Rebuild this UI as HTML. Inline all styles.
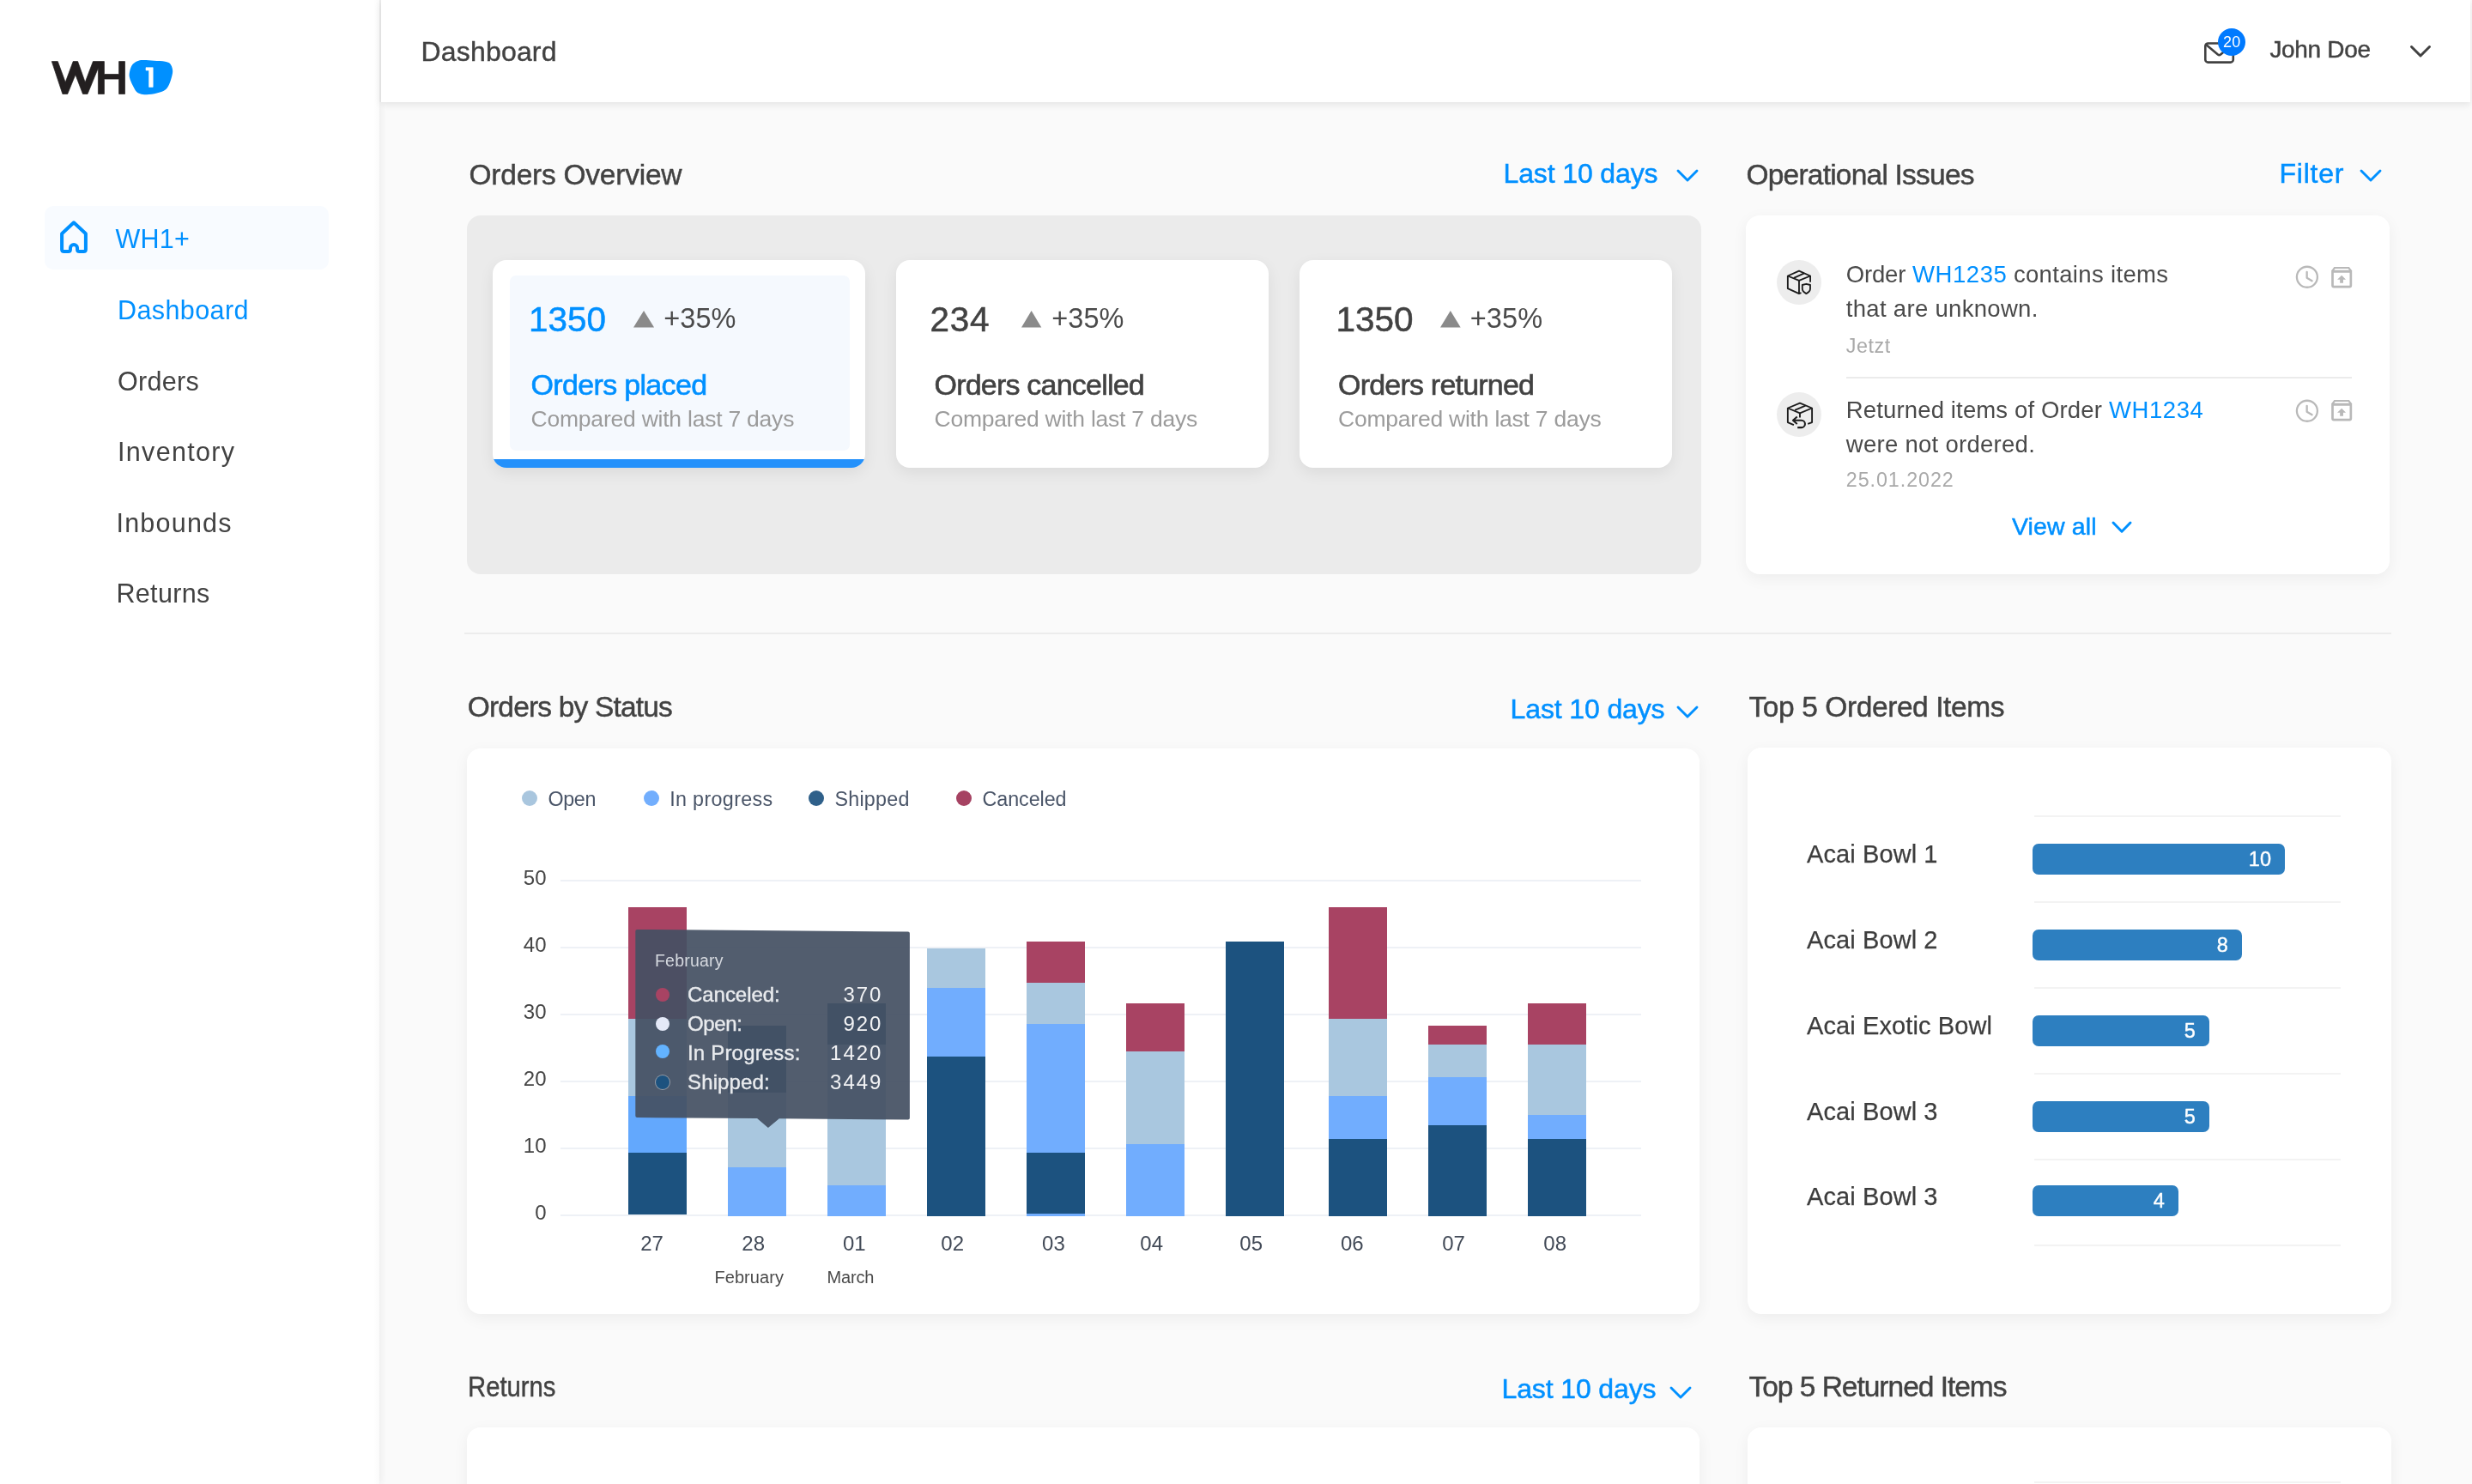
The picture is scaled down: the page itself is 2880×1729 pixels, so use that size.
<!DOCTYPE html>
<html lang="en"><head><meta charset="utf-8"><title>WH1+ Dashboard</title>
<style>

*{box-sizing:border-box;margin:0;padding:0}
html,body{width:2880px;height:1729px;overflow:hidden;background:#fafafa;font-family:"Liberation Sans",sans-serif}
body{position:relative}
#root{position:absolute;left:0;top:0;width:2880px;height:1729px;overflow:hidden;will-change:transform}
.t{position:absolute;white-space:pre;line-height:1;display:block}
.a{position:absolute;display:block}
.card{position:absolute;background:#fff;border-radius:16px;box-shadow:0 5px 18px rgba(0,0,0,.055)}
svg{position:absolute;overflow:visible}

</style></head>
<body>
<div id="root">
<div class="a" style="left:0;top:0;width:441.8px;height:1729px;background:#fff;box-shadow:2px 0 8px rgba(0,0,0,.06)"></div>
<div class="a" style="left:435px;top:0;width:6.8px;height:1729px;background:linear-gradient(to right,rgba(0,0,0,0),rgba(0,0,0,.02))"></div>
<div class="a" style="left:441.8px;top:0;width:2.3px;height:119.3px;background:#ececec"></div>
<div class="a" style="left:444px;top:0;width:2434px;height:119px;background:#fff;box-shadow:0 3px 8px rgba(0,0,0,.09)"></div>
<svg style="left:0;top:0" width="260" height="130" viewBox="0 0 260 130"><path d="M60.3 71.6 L67.3 71.6 L76.2 95.8 L85.2 71.6 L90.6 71.6 L99.2 95.8 L108.4 71.6 L121.4 71.6 L121.4 86.5 L138.6 86.5 L138.6 71.6 L145.5 71.6 L145.5 109.5 L138.6 109.5 L138.6 92.1 L121.4 92.1 L121.4 109.5 L114.4 109.5 L114.4 79.3 L102.0 109.5 L96.5 109.5 L87.9 87.0 L78.7 109.5 L72.9 109.5 Z" fill="#231f20" stroke="#231f20" stroke-width="0.7" stroke-linejoin="round"/><path d="M150.65 85.90 C150.98 83.20 152.04 78.63 153.60 76.20 C155.16 73.77 157.85 72.33 160.00 71.30 C162.15 70.27 163.27 70.10 166.50 70.00 C169.73 69.90 175.08 70.42 179.40 70.70 C183.72 70.98 189.27 71.07 192.40 71.65 C195.53 72.23 196.75 72.58 198.20 74.20 C199.65 75.83 200.77 78.92 201.10 81.40 C201.43 83.88 200.90 86.20 200.20 89.10 C199.50 92.00 198.20 96.20 196.90 98.80 C195.60 101.40 194.77 103.08 192.40 104.70 C190.03 106.32 186.27 107.58 182.70 108.50 C179.13 109.42 174.23 110.08 171.00 110.20 C167.77 110.32 165.35 109.80 163.30 109.20 C161.25 108.60 160.10 108.12 158.70 106.60 C157.30 105.08 156.08 102.47 154.90 100.10 C153.72 97.73 152.31 94.77 151.60 92.40 C150.89 90.03 150.32 88.60 150.65 85.90 Z" fill="#0090ff"/><path d="M170 78.7 H178.2 V101.4 H173.6 V82 H170 Z" fill="#fff" stroke="#fff" stroke-width="0.6" stroke-linejoin="round"/></svg>
<div class="a" style="left:52px;top:240px;width:331px;height:74px;background:#f8fbff;border-radius:10px"></div>
<svg style="left:0;top:0" width="443" height="330" viewBox="0 0 443 330"><path d="M72.1 272.2 L85.95 259.3 L99.9 272.2 V290.4 Q99.9 292.9 97.4 292.9 H92.5 Q90.05 292.9 90.05 290.4 V288.95 A4.05 4.05 0 0 0 81.96 288.95 V290.4 Q81.96 292.9 79.5 292.9 H74.6 Q72.1 292.9 72.1 290.4 Z" fill="none" stroke="#0090ff" stroke-width="4" stroke-linejoin="round"/></svg>
<svg style="left:0;top:0" width="2880" height="119" viewBox="0 0 2880 119" fill="none" stroke="#424242" stroke-width="2.6" stroke-linejoin="round" stroke-linecap="round"><rect x="2569.3" y="50.55" width="32.5" height="22.05" rx="3.2"/><path d="M2570.2 51.9 L2583.9 63.6 Q2585.5 64.9 2587.1 63.6 L2600.9 51.9"/></svg>
<div class="a" style="left:2583.9px;top:32.85px;width:32.2px;height:32.2px;border-radius:50%;background:#007aff"></div>
<svg style="left:2808px;top:53px" width="24" height="15" viewBox="0 0 24 15"><path d="M1.5 1.5 L12 12 L22.5 1.5" fill="none" stroke="#424242" stroke-width="3" stroke-linecap="round" stroke-linejoin="round"/></svg>
<svg style="left:1952.5px;top:197.0px" width="26" height="15" viewBox="-2 -2 26 15"><path d="M0 0 L11.0 11 L22 0" fill="none" stroke="#0090ff" stroke-width="2.9" stroke-linecap="round" stroke-linejoin="round"/></svg>
<div class="a" style="left:544px;top:250.8px;width:1438px;height:418.2px;background:#ebebeb;border-radius:16px"></div>
<div class="a" style="left:574px;top:303px;width:434px;height:241.5px;background:#fff;border-radius:16px;box-shadow:0 6px 18px rgba(0,0,0,.07);overflow:hidden"><div class="a" style="left:19.6px;top:18.2px;width:396.5px;height:204px;background:#f5f9fe;border-radius:7px"></div><div class="a" style="left:0;bottom:0;width:434px;height:9.5px;background:#2491fb"></div></div>
<div class="a" style="left:1044px;top:303px;width:434px;height:241.5px;background:#fff;border-radius:16px;box-shadow:0 6px 18px rgba(0,0,0,.07);overflow:hidden"></div>
<div class="a" style="left:1514px;top:303px;width:434px;height:241.5px;background:#fff;border-radius:16px;box-shadow:0 6px 18px rgba(0,0,0,.07);overflow:hidden"></div>
<svg style="left:737.5px;top:362px" width="24.100000000000023" height="19.399999999999977" viewBox="0 0 24.100000000000023 19.399999999999977"><path d="M0 19.399999999999977 L12.050000000000011 0 L24.100000000000023 19.399999999999977 Z" fill="#8a8a8a"/></svg>
<svg style="left:1189.5px;top:362px" width="23.299999999999955" height="19.399999999999977" viewBox="0 0 23.299999999999955 19.399999999999977"><path d="M0 19.399999999999977 L11.649999999999977 0 L23.299999999999955 19.399999999999977 Z" fill="#8a8a8a"/></svg>
<svg style="left:1677.5px;top:362px" width="23.700000000000045" height="19.399999999999977" viewBox="0 0 23.700000000000045 19.399999999999977"><path d="M0 19.399999999999977 L11.850000000000023 0 L23.700000000000045 19.399999999999977 Z" fill="#8a8a8a"/></svg>
<svg style="left:2748.5px;top:197.0px" width="26" height="15" viewBox="-2 -2 26 15"><path d="M0 0 L11.0 11 L22 0" fill="none" stroke="#0090ff" stroke-width="2.9" stroke-linecap="round" stroke-linejoin="round"/></svg>
<div class="card" style="left:2034px;top:251px;width:750px;height:418px"></div>
<div class="a" style="left:2069.8px;top:302.8px;width:52px;height:52px;border-radius:50%;background:#ededed"></div>
<div class="a" style="left:2069.8px;top:456.8px;width:52px;height:52px;border-radius:50%;background:#ededed"></div>
<svg style="left:0;top:0" width="2880" height="700" viewBox="0 0 2880 700" fill="none" stroke="#1c1c1c" stroke-width="1.85" stroke-linejoin="round" stroke-linecap="butt"><path d="M2082.84 321.5 L2095.97 315.6 L2109.1 321.5 L2095.97 326.9 Z"/><path d="M2082.84 321.5 V336.2 L2095.97 342.1 L2098.5 341.2"/><path d="M2095.97 326.9 V342.1"/><path d="M2109.1 321.5 V328.7"/><path d="M2089.9 323.9 L2102 318.4"/><path d="M2099.8 332 L2104.4 330.8 L2109 332 V336.6 C2109 339.5 2106.5 341 2104.4 342.1 C2102.3 341 2099.8 339.5 2099.8 336.6 Z"/><path d="M2082.84 475.5 L2096.98 469.6 L2111.1 475.5 L2096.98 481.3 Z"/><path d="M2096.98 481.3 V486.4"/><path d="M2082.84 475.5 V492.05 L2089.9 495.2"/><path d="M2111.1 475.5 V492.05 L2106.2 493.95"/><path d="M2091.1 477.9 L2103.45 472.65"/><path d="M2093.75 485.6 L2088.9 489.8 L2093.75 494.1 M2089.2 489.8 H2098.8 A4.15 4.15 0 0 1 2098.8 498.1 H2094.2" stroke-width="2.05"/></svg>
<div class="a" style="left:2150.8px;top:439px;width:589px;height:2px;background:#ebebeb;"></div>
<svg style="left:2459.9px;top:606.5px" width="24" height="14.2" viewBox="-2 -2 24 14.2"><path d="M0 0 L10.0 10.2 L20 0" fill="none" stroke="#0090ff" stroke-width="3" stroke-linecap="round" stroke-linejoin="round"/></svg>
<svg style="left:0;top:0px" width="2880" height="400" viewBox="0 0 2880 400" fill="none" stroke="#b9b9b9" stroke-width="2.3" stroke-linecap="round" stroke-linejoin="round"><circle cx="2687.9" cy="322.75" r="12"/><path d="M2687.64 316.8 V323.7 L2693.6 327.2"/></svg>
<svg style="left:0;top:0px" width="2880" height="400" viewBox="0 0 2880 400"><path d="M2717.5 316.35 V332.6 Q2717.5 334.1 2719 334.1 H2737.35 Q2738.85 334.1 2738.85 332.6 V316.35 Z" fill="none" stroke="#b9b9b9" stroke-width="2.7"/><path d="M2719.4 310.9 H2736.9 L2740.2 315.2 H2716.15 Z" fill="#b9b9b9"/><path d="M2720.6 313.1 H2735.7 L2737 314.8 H2719.3 Z" fill="#fff"/><path d="M2728.16 320.75 L2733.07 325.66 H2729.98 V329.85 H2726.16 V325.66 H2723.06 Z" fill="#b9b9b9"/></svg>
<svg style="left:0;top:155.9px" width="2880" height="400" viewBox="0 0 2880 400" fill="none" stroke="#b9b9b9" stroke-width="2.3" stroke-linecap="round" stroke-linejoin="round"><circle cx="2687.9" cy="322.75" r="12"/><path d="M2687.64 316.8 V323.7 L2693.6 327.2"/></svg>
<svg style="left:0;top:155px" width="2880" height="400" viewBox="0 0 2880 400"><path d="M2717.5 316.35 V332.6 Q2717.5 334.1 2719 334.1 H2737.35 Q2738.85 334.1 2738.85 332.6 V316.35 Z" fill="none" stroke="#b9b9b9" stroke-width="2.7"/><path d="M2719.4 310.9 H2736.9 L2740.2 315.2 H2716.15 Z" fill="#b9b9b9"/><path d="M2720.6 313.1 H2735.7 L2737 314.8 H2719.3 Z" fill="#fff"/><path d="M2728.16 320.75 L2733.07 325.66 H2729.98 V329.85 H2726.16 V325.66 H2723.06 Z" fill="#b9b9b9"/></svg>
<div class="a" style="left:541px;top:737px;width:2245px;height:2px;background:#ececec;"></div>
<svg style="left:1952.5px;top:822.0px" width="26" height="15" viewBox="-2 -2 26 15"><path d="M0 0 L11.0 11 L22 0" fill="none" stroke="#0090ff" stroke-width="2.9" stroke-linecap="round" stroke-linejoin="round"/></svg>
<div class="card" style="left:544px;top:871.5px;width:1435.5px;height:659px"></div>
<div class="a" style="left:608px;top:921px;width:18px;height:18px;border-radius:50%;background:#a9c6de"></div>
<div class="a" style="left:749.8px;top:921px;width:18px;height:18px;border-radius:50%;background:#72aefd"></div>
<div class="a" style="left:942px;top:921px;width:18px;height:18px;border-radius:50%;background:#2f608a"></div>
<div class="a" style="left:1114px;top:921px;width:18px;height:18px;border-radius:50%;background:#a64262"></div>
<div class="a" style="left:653.3px;top:1025.0px;width:1259.2px;height:1.9px;background:#eef1f6;"></div>
<div class="a" style="left:653.3px;top:1103.0px;width:1259.2px;height:1.9px;background:#eef1f6;"></div>
<div class="a" style="left:653.3px;top:1181.0px;width:1259.2px;height:1.9px;background:#eef1f6;"></div>
<div class="a" style="left:653.3px;top:1259.0px;width:1259.2px;height:1.9px;background:#eef1f6;"></div>
<div class="a" style="left:653.3px;top:1337.0px;width:1259.2px;height:1.9px;background:#eef1f6;"></div>
<div class="a" style="left:653.3px;top:1415.0px;width:1259.2px;height:1.9px;background:#eef1f6;"></div>
<svg style="left:0;top:0" width="2880" height="1729" viewBox="0 0 2880 1729" shape-rendering="crispEdges"><rect x="732" y="1057" width="68" height="129.8" fill="#a84363"/><rect x="732" y="1186.8" width="68" height="89.7" fill="#a9c7df"/><rect x="732" y="1276.5" width="68" height="66.5" fill="#63a8fd"/><rect x="732" y="1343" width="68" height="71.9" fill="#1c527f"/><rect x="848.2" y="1195.1" width="68" height="77.6" fill="#1c527f"/><rect x="848.2" y="1272.7" width="68" height="87.7" fill="#a9c7df"/><rect x="848.2" y="1360.4" width="68" height="56.3" fill="#71adfe"/><rect x="964" y="1169.1" width="68" height="47.8" fill="#1c527f"/><rect x="964" y="1216.9" width="68" height="163.7" fill="#a9c7df"/><rect x="964" y="1380.6" width="68" height="36.1" fill="#71adfe"/><rect x="1080" y="1105" width="68" height="46.0" fill="#a9c7df"/><rect x="1080" y="1151" width="68" height="79.7" fill="#71adfe"/><rect x="1080" y="1230.7" width="68" height="186.0" fill="#1c527f"/><rect x="1196" y="1097" width="68" height="48.0" fill="#a84363"/><rect x="1196" y="1145" width="68" height="48.0" fill="#a9c7df"/><rect x="1196" y="1193" width="68" height="150.0" fill="#71adfe"/><rect x="1196" y="1343" width="68" height="71.4" fill="#1c527f"/><rect x="1196" y="1414.4" width="68" height="2.3" fill="#71adfe"/><rect x="1312" y="1169" width="68" height="56.0" fill="#a84363"/><rect x="1312" y="1225" width="68" height="107.8" fill="#a9c7df"/><rect x="1312" y="1332.8" width="68" height="83.9" fill="#71adfe"/><rect x="1428" y="1097" width="68" height="319.7" fill="#1c527f"/><rect x="1548.2" y="1057" width="68" height="129.8" fill="#a84363"/><rect x="1548.2" y="1186.8" width="68" height="89.9" fill="#a9c7df"/><rect x="1548.2" y="1276.7" width="68" height="49.9" fill="#71adfe"/><rect x="1548.2" y="1326.6" width="68" height="90.1" fill="#1c527f"/><rect x="1664.3" y="1195" width="68" height="21.7" fill="#a84363"/><rect x="1664.3" y="1216.7" width="68" height="38.1" fill="#a9c7df"/><rect x="1664.3" y="1254.8" width="68" height="56.2" fill="#71adfe"/><rect x="1664.3" y="1311" width="68" height="105.7" fill="#1c527f"/><rect x="1780" y="1169" width="68" height="47.7" fill="#a84363"/><rect x="1780" y="1216.7" width="68" height="82.3" fill="#a9c7df"/><rect x="1780" y="1299" width="68" height="27.6" fill="#71adfe"/><rect x="1780" y="1326.6" width="68" height="90.1" fill="#1c527f"/></svg>
<svg style="left:0;top:0" width="2880" height="1729" viewBox="0 0 2880 1729"><path d="M742.3 1082.9 L1057.9 1085.5 Q1059.9 1085.5 1059.9 1087.5 L1059.9 1302.5 Q1059.9 1304.5 1057.9 1304.5 L907.8 1303.3 L894.9 1314 L882.1 1303.1 L742.3 1302 Q740.3 1302 740.3 1300 L740.3 1084.9 Q740.3 1082.9 742.3 1082.9 Z" fill="rgba(69,81,99,0.93)"/></svg>
<div class="card" style="left:2036px;top:871px;width:749.7px;height:659.5px"></div>
<div class="a" style="left:2369.6px;top:949.5px;width:357px;height:2px;background:#f3f3f3;"></div>
<div class="a" style="left:2369.6px;top:1049.5px;width:357px;height:2px;background:#f3f3f3;"></div>
<div class="a" style="left:2369.6px;top:1149.5px;width:357px;height:2px;background:#f3f3f3;"></div>
<div class="a" style="left:2369.6px;top:1249.5px;width:357px;height:2px;background:#f3f3f3;"></div>
<div class="a" style="left:2369.6px;top:1349.5px;width:357px;height:2px;background:#f3f3f3;"></div>
<div class="a" style="left:2369.6px;top:1449.5px;width:357px;height:2px;background:#f3f3f3;"></div>
<div class="a" style="left:2368.1px;top:983.0999999999999px;width:293.9000000000001px;height:35.7px;background:#2d7fc0;border-radius:7px"></div>
<div class="a" style="left:2368.1px;top:1083.1px;width:243.70000000000027px;height:35.7px;background:#2d7fc0;border-radius:7px"></div>
<div class="a" style="left:2368.1px;top:1183.1px;width:205.80000000000018px;height:35.7px;background:#2d7fc0;border-radius:7px"></div>
<div class="a" style="left:2368.1px;top:1283.1px;width:205.80000000000018px;height:35.7px;background:#2d7fc0;border-radius:7px"></div>
<div class="a" style="left:2368.1px;top:1381.1px;width:169.80000000000018px;height:35.7px;background:#2d7fc0;border-radius:7px"></div>
<svg style="left:1945.0px;top:1614.5px" width="26" height="15" viewBox="-2 -2 26 15"><path d="M0 0 L11.0 11 L22 0" fill="none" stroke="#0090ff" stroke-width="2.9" stroke-linecap="round" stroke-linejoin="round"/></svg>
<div class="card" style="left:544px;top:1663px;width:1435.5px;height:200px"></div>
<div class="card" style="left:2036px;top:1663px;width:749.7px;height:200px"></div>
<div class="a" style="left:2369.6px;top:1725.5px;width:357px;height:2px;background:#f3f3f3;"></div>
<span class="t" style="left:134.50px;top:262.98px;font-size:30.5px;color:#0090ff;font-weight:400;letter-spacing:0.202px;">WH1+</span>
<span class="t" style="left:137.00px;top:345.58px;font-size:30.5px;color:#0090ff;font-weight:400;letter-spacing:0.398px;">Dashboard</span>
<span class="t" style="left:137.00px;top:429.48px;font-size:30.5px;color:#424242;font-weight:400;letter-spacing:0.296px;">Orders</span>
<span class="t" style="left:137.00px;top:511.08px;font-size:30.5px;color:#424242;font-weight:400;letter-spacing:1.316px;">Inventory</span>
<span class="t" style="left:135.50px;top:593.58px;font-size:30.5px;color:#424242;font-weight:400;letter-spacing:1.214px;">Inbounds</span>
<span class="t" style="left:135.50px;top:676.48px;font-size:30.5px;color:#424242;font-weight:400;letter-spacing:0.317px;">Returns</span>
<span class="t" style="left:490.50px;top:43.71px;font-size:32px;color:#424242;font-weight:400;letter-spacing:0.182px;-webkit-text-stroke:0.4px #424242;">Dashboard</span>
<span class="t" style="left:2590.00px;top:39.86px;font-size:18px;color:#fff;font-weight:400;letter-spacing:0.269px;">20</span>
<span class="t" style="left:2644.40px;top:43.60px;font-size:28px;color:#424242;font-weight:400;letter-spacing:-0.325px;-webkit-text-stroke:0.45px #424242;">John Doe</span>
<span class="t" style="left:546.50px;top:187.24px;font-size:33.5px;color:#424242;font-weight:400;letter-spacing:-0.237px;-webkit-text-stroke:0.45px #424242;">Orders Overview</span>
<span class="t" style="left:1751.50px;top:186.41px;font-size:32px;color:#0090ff;font-weight:400;letter-spacing:-0.132px;-webkit-text-stroke:0.5px #0090ff;">Last 10 days</span>
<span class="t" style="left:616.00px;top:352.12px;font-size:40.5px;color:#0090ff;font-weight:400;letter-spacing:-0.036px;-webkit-text-stroke:0.5px #0090ff;">1350</span>
<span class="t" style="left:773.20px;top:355.39px;font-size:32.5px;color:#4a4a4a;font-weight:400;letter-spacing:0.090px;">+35%</span>
<span class="t" style="left:618.60px;top:430.52px;font-size:34px;color:#0090ff;font-weight:400;letter-spacing:-0.671px;-webkit-text-stroke:0.6px #0090ff;">Orders placed</span>
<span class="t" style="left:618.60px;top:475.47px;font-size:26.5px;color:#9b9b9b;font-weight:400;letter-spacing:-0.228px;">Compared with last 7 days</span>
<span class="t" style="left:1083.50px;top:352.12px;font-size:40.5px;color:#424242;font-weight:400;letter-spacing:0.711px;-webkit-text-stroke:0.5px #424242;">234</span>
<span class="t" style="left:1225.20px;top:355.39px;font-size:32.5px;color:#4a4a4a;font-weight:400;letter-spacing:0.090px;">+35%</span>
<span class="t" style="left:1088.50px;top:430.52px;font-size:34px;color:#424242;font-weight:400;letter-spacing:-0.788px;-webkit-text-stroke:0.6px #424242;">Orders cancelled</span>
<span class="t" style="left:1088.50px;top:475.47px;font-size:26.5px;color:#9b9b9b;font-weight:400;letter-spacing:-0.228px;">Compared with last 7 days</span>
<span class="t" style="left:1556.50px;top:352.12px;font-size:40.5px;color:#424242;font-weight:400;letter-spacing:-0.036px;-webkit-text-stroke:0.5px #424242;">1350</span>
<span class="t" style="left:1712.80px;top:355.39px;font-size:32.5px;color:#4a4a4a;font-weight:400;letter-spacing:0.090px;">+35%</span>
<span class="t" style="left:1559.00px;top:430.52px;font-size:34px;color:#424242;font-weight:400;letter-spacing:-0.786px;-webkit-text-stroke:0.6px #424242;">Orders returned</span>
<span class="t" style="left:1559.00px;top:475.47px;font-size:26.5px;color:#9b9b9b;font-weight:400;letter-spacing:-0.228px;">Compared with last 7 days</span>
<span class="t" style="left:2034.50px;top:187.24px;font-size:33.5px;color:#424242;font-weight:400;letter-spacing:-0.784px;-webkit-text-stroke:0.45px #424242;">Operational Issues</span>
<span class="t" style="left:2655.50px;top:186.41px;font-size:32px;color:#0090ff;font-weight:400;letter-spacing:0.778px;-webkit-text-stroke:0.5px #0090ff;">Filter</span>
<span class="t" style="left:2150.80px;top:306.42px;font-size:27.5px;color:#4a4a4a;font-weight:400;letter-spacing:-0.199px;">Order</span>
<span class="t" style="left:2227.90px;top:306.42px;font-size:27.5px;color:#0090ff;font-weight:400;letter-spacing:0.600px;">WH1235</span>
<span class="t" style="left:2345.90px;top:306.42px;font-size:27.5px;color:#4a4a4a;font-weight:400;letter-spacing:0.340px;">contains items</span>
<span class="t" style="left:2150.80px;top:346.42px;font-size:27.5px;color:#4a4a4a;font-weight:400;letter-spacing:0.305px;">that are unknown.</span>
<span class="t" style="left:2150.80px;top:391.78px;font-size:23.3px;color:#a9a9a9;font-weight:400;letter-spacing:0.574px;">Jetzt</span>
<span class="t" style="left:2150.80px;top:464.42px;font-size:27.5px;color:#4a4a4a;font-weight:400;letter-spacing:0.142px;">Returned items of Order</span>
<span class="t" style="left:2456.90px;top:464.42px;font-size:27.5px;color:#0090ff;font-weight:400;letter-spacing:0.600px;">WH1234</span>
<span class="t" style="left:2150.80px;top:504.42px;font-size:27.5px;color:#4a4a4a;font-weight:400;letter-spacing:0.278px;">were not ordered.</span>
<span class="t" style="left:2150.80px;top:547.78px;font-size:23.3px;color:#a9a9a9;font-weight:400;letter-spacing:0.932px;">25.01.2022</span>
<span class="t" style="left:2344.00px;top:598.87px;font-size:28.5px;color:#0090ff;font-weight:400;letter-spacing:0.114px;-webkit-text-stroke:0.5px #0090ff;">View all</span>
<span class="t" style="left:544.80px;top:806.84px;font-size:33.5px;color:#424242;font-weight:400;letter-spacing:-0.824px;-webkit-text-stroke:0.45px #424242;">Orders by Status</span>
<span class="t" style="left:1759.60px;top:810.41px;font-size:32px;color:#0090ff;font-weight:400;letter-spacing:-0.132px;-webkit-text-stroke:0.5px #0090ff;">Last 10 days</span>
<span class="t" style="left:638.40px;top:919.58px;font-size:23.3px;color:#4a5568;font-weight:400;letter-spacing:-0.333px;">Open</span>
<span class="t" style="left:780.20px;top:919.58px;font-size:23.3px;color:#4a5568;font-weight:400;letter-spacing:0.345px;">In progress</span>
<span class="t" style="left:972.40px;top:919.58px;font-size:23.3px;color:#4a5568;font-weight:400;letter-spacing:0.250px;">Shipped</span>
<span class="t" style="left:1144.50px;top:919.58px;font-size:23.3px;color:#4a5568;font-weight:400;letter-spacing:-0.062px;">Canceled</span>
<span class="t" style="left:609.80px;top:1010.88px;font-size:24px;color:#454545;font-weight:400;letter-spacing:0.000px;">50</span>
<span class="t" style="left:609.80px;top:1088.88px;font-size:24px;color:#454545;font-weight:400;letter-spacing:0.000px;">40</span>
<span class="t" style="left:609.80px;top:1166.88px;font-size:24px;color:#454545;font-weight:400;letter-spacing:0.000px;">30</span>
<span class="t" style="left:609.80px;top:1244.88px;font-size:24px;color:#454545;font-weight:400;letter-spacing:0.000px;">20</span>
<span class="t" style="left:609.80px;top:1322.88px;font-size:24px;color:#454545;font-weight:400;letter-spacing:0.000px;">10</span>
<span class="t" style="left:623.14px;top:1400.88px;font-size:24px;color:#454545;font-weight:400;letter-spacing:0.000px;">0</span>
<span class="t" style="left:746.25px;top:1436.68px;font-size:24px;color:#424a57;font-weight:400;letter-spacing:0.000px;">27</span>
<span class="t" style="left:864.35px;top:1436.68px;font-size:24px;color:#424a57;font-weight:400;letter-spacing:0.000px;">28</span>
<span class="t" style="left:981.95px;top:1436.68px;font-size:24px;color:#424a57;font-weight:400;letter-spacing:0.000px;">01</span>
<span class="t" style="left:1096.35px;top:1436.68px;font-size:24px;color:#424a57;font-weight:400;letter-spacing:0.000px;">02</span>
<span class="t" style="left:1214.05px;top:1436.68px;font-size:24px;color:#424a57;font-weight:400;letter-spacing:0.000px;">03</span>
<span class="t" style="left:1328.35px;top:1436.68px;font-size:24px;color:#424a57;font-weight:400;letter-spacing:0.000px;">04</span>
<span class="t" style="left:1444.35px;top:1436.68px;font-size:24px;color:#424a57;font-weight:400;letter-spacing:0.000px;">05</span>
<span class="t" style="left:1561.95px;top:1436.68px;font-size:24px;color:#424a57;font-weight:400;letter-spacing:0.000px;">06</span>
<span class="t" style="left:1680.25px;top:1436.68px;font-size:24px;color:#424a57;font-weight:400;letter-spacing:0.000px;">07</span>
<span class="t" style="left:1798.35px;top:1436.68px;font-size:24px;color:#424a57;font-weight:400;letter-spacing:0.000px;">08</span>
<span class="t" style="left:832.50px;top:1478.17px;font-size:20px;color:#4a4a4a;font-weight:400;letter-spacing:0.053px;">February</span>
<span class="t" style="left:963.40px;top:1478.17px;font-size:20px;color:#4a4a4a;font-weight:400;letter-spacing:-0.145px;">March</span>
<span class="t" style="left:2037.50px;top:806.84px;font-size:33.5px;color:#424242;font-weight:400;letter-spacing:-0.410px;-webkit-text-stroke:0.45px #424242;">Top 5 Ordered Items</span>
<span class="t" style="left:2105.00px;top:980.85px;font-size:29px;color:#3d3d3d;font-weight:400;letter-spacing:0.098px;-webkit-text-stroke:0.25px #3d3d3d;">Acai Bowl 1</span>
<span class="t" style="left:2619.86px;top:990.11px;font-size:23.5px;color:#fff;font-weight:400;letter-spacing:0.000px;-webkit-text-stroke:0.4px #fff;">10</span>
<span class="t" style="left:2105.00px;top:1080.85px;font-size:29px;color:#3d3d3d;font-weight:400;letter-spacing:0.098px;-webkit-text-stroke:0.25px #3d3d3d;">Acai Bowl 2</span>
<span class="t" style="left:2582.72px;top:1090.11px;font-size:23.5px;color:#fff;font-weight:400;letter-spacing:0.000px;-webkit-text-stroke:0.4px #fff;">8</span>
<span class="t" style="left:2105.00px;top:1180.85px;font-size:29px;color:#3d3d3d;font-weight:400;letter-spacing:0.109px;-webkit-text-stroke:0.25px #3d3d3d;">Acai Exotic Bowl</span>
<span class="t" style="left:2544.82px;top:1190.11px;font-size:23.5px;color:#fff;font-weight:400;letter-spacing:0.000px;-webkit-text-stroke:0.4px #fff;">5</span>
<span class="t" style="left:2105.00px;top:1280.85px;font-size:29px;color:#3d3d3d;font-weight:400;letter-spacing:0.098px;-webkit-text-stroke:0.25px #3d3d3d;">Acai Bowl 3</span>
<span class="t" style="left:2544.82px;top:1290.11px;font-size:23.5px;color:#fff;font-weight:400;letter-spacing:0.000px;-webkit-text-stroke:0.4px #fff;">5</span>
<span class="t" style="left:2105.00px;top:1380.45px;font-size:29px;color:#3d3d3d;font-weight:400;letter-spacing:0.098px;-webkit-text-stroke:0.25px #3d3d3d;">Acai Bowl 3</span>
<span class="t" style="left:2508.82px;top:1388.11px;font-size:23.5px;color:#fff;font-weight:400;letter-spacing:0.000px;-webkit-text-stroke:0.4px #fff;">4</span>
<span class="t" style="left:544.80px;top:1599.14px;font-size:33.5px;color:#424242;font-weight:400;letter-spacing:0.000px;transform:scaleX(0.8737);transform-origin:0 0;-webkit-text-stroke:0.45px #424242;">Returns</span>
<span class="t" style="left:1749.50px;top:1601.91px;font-size:32px;color:#0090ff;font-weight:400;letter-spacing:-0.132px;-webkit-text-stroke:0.5px #0090ff;">Last 10 days</span>
<span class="t" style="left:2037.50px;top:1599.14px;font-size:33.5px;color:#424242;font-weight:400;letter-spacing:-1.015px;-webkit-text-stroke:0.45px #424242;">Top 5 Returned Items</span>
<div class="a" style="left:764.0px;top:1150.9px;width:16.2px;height:16.2px;border-radius:50%;background:#a84363;"></div>
<div class="a" style="left:764.0px;top:1184.9px;width:16.2px;height:16.2px;border-radius:50%;background:#e4e9f8;"></div>
<div class="a" style="left:764.0px;top:1217.1000000000001px;width:16.2px;height:16.2px;border-radius:50%;background:#63b3ff;"></div>
<div class="a" style="left:764.0px;top:1253.0px;width:16.2px;height:16.2px;border-radius:50%;background:#1c527f;box-shadow:0 0 0 1px rgba(255,255,255,.4);"></div>
<span class="t" style="left:763.00px;top:1109.69px;font-size:19.5px;color:#d5d9df;font-weight:400;letter-spacing:0.210px;">February</span>
<span class="t" style="left:801.00px;top:1146.78px;font-size:24px;color:#e9ebee;font-weight:400;letter-spacing:-0.047px;-webkit-text-stroke:0.4px #e9ebee;">Canceled:</span>
<span class="t" style="left:982.60px;top:1146.78px;font-size:24px;color:#f1f2f4;font-weight:400;letter-spacing:1.877px;">370</span>
<span class="t" style="left:801.00px;top:1181.08px;font-size:24px;color:#e9ebee;font-weight:400;letter-spacing:-0.373px;-webkit-text-stroke:0.4px #e9ebee;">Open:</span>
<span class="t" style="left:982.60px;top:1181.08px;font-size:24px;color:#f1f2f4;font-weight:400;letter-spacing:1.877px;">920</span>
<span class="t" style="left:801.00px;top:1214.58px;font-size:24px;color:#e9ebee;font-weight:400;letter-spacing:0.183px;-webkit-text-stroke:0.4px #e9ebee;">In Progress:</span>
<span class="t" style="left:967.10px;top:1214.58px;font-size:24px;color:#f1f2f4;font-weight:400;letter-spacing:1.970px;">1420</span>
<span class="t" style="left:801.00px;top:1248.98px;font-size:24px;color:#e9ebee;font-weight:400;letter-spacing:0.136px;-webkit-text-stroke:0.4px #e9ebee;">Shipped:</span>
<span class="t" style="left:967.10px;top:1248.98px;font-size:24px;color:#f1f2f4;font-weight:400;letter-spacing:1.970px;">3449</span>
</div>
<script>(function(){var w=window.innerWidth;if(w&&Math.abs(w-2880)>2){var r=document.getElementById('root');r.style.transformOrigin='0 0';r.style.transform='scale('+(w/2880)+')';}})();</script>
</body></html>
